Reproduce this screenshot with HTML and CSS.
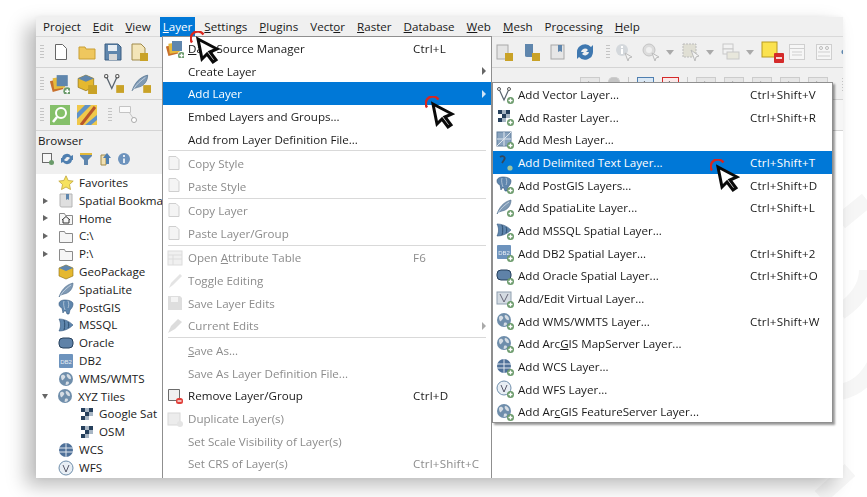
FILE: index.html
```html
<!DOCTYPE html>
<html lang="en">
<head>
<meta charset="utf-8">
<title>QGIS Layer menu</title>
<link rel="stylesheet" href="styles.css">
</head>
<body>
<svg class="defs" width="0" height="0" aria-hidden="true">
  <defs>
    <g id="plus"><circle cx="12.5" cy="12.5" r="3.5" fill="#6a9a6a"/><path d="M10.5 12.5h4M12.5 10.5v4" stroke="#fff" stroke-width="1.3"/></g>
    <g id="globe"><circle cx="8" cy="8" r="7" fill="#6f8eab"/><path d="M3 5c2-2 3-1 4 0s-1 3-2 4-2-1-2-4zM9 3c2 0 4 2 4 4s-2 1-3 0-2-3-1-4zM8 11c2-1 3 0 3 1s-2 2-3 2 0-2 0-3z" fill="#d6dde4"/></g>
    <g id="folder"><path d="M1.500 3.500h5l1 2h7v9h-13z" fill="#f6f6f6" stroke="#8a8a8a"/></g>
    <g id="checker"><path fill="#26405c" d="M2 2h4v4h-4zM10 2h4v4h-4zM6 6h4v4h-4zM2 10h4v4h-4z"/><path fill="#a8b6c4" d="M6 2h4v4h-4zM10 6h4v4h-4zM6 10h4v4h-4z"/></g>
    <g id="elephant"><path d="M1 5c0-3 3-4 6-4s8 1 8 4-2 5-3 6l-1 4h-2l-1-3-2 0-1 2-1-5c-2-1-3-2-3-4z" fill="#5f86ad" stroke="#34587d" stroke-width=".6"/><path d="M6 2c-1 3 0 6 1 9M10 2c1 2 1 5 0 7" stroke="#c9d6e3" fill="none" stroke-width=".7"/></g>
    <g id="feather"><path d="M1 15C3 9 7 3 15 1c0 5-3 10-9 11l-3 1z" fill="#7f9ab5" stroke="#4e6c8a" stroke-width=".6"/><path d="M2 14C5 9 9 6 13 3" stroke="#d8e2ec" fill="none" stroke-width=".7"/></g>
    <g id="fish"><path d="M1 2c5 0 10 2 14 6-4 4-9 6-14 6 2-4 2-8 0-12z" fill="#5f86ad" stroke="#34587d" stroke-width=".6"/><path d="M6 3c1 3 1 7 0 10M10 5c1 2 1 4 0 6" stroke="#2e4f70" fill="none"/></g>
    <g id="pill"><rect x="1" y="3" width="14" height="10" rx="4" fill="#5f82a8" stroke="#26405c"/></g>
    <g id="db2"><rect x="1" y="1" width="14" height="14" rx="1" fill="#6d93bd"/><text x="8" y="10.500" class="db2-text">DB2</text></g>
    <g id="cube"><path d="M8 1l7 3v8l-7 3-7-3V4z" fill="#e5b82f" stroke="#8a6d10" stroke-width=".6"/><path d="M8 1l7 3-7 3-7-3z" fill="#5f86ad"/></g>
    <g id="vnode"><path d="M2 2l5 11 5-11" fill="none" stroke="#5a6570" stroke-width="1.200"/><circle cx="2" cy="2" r="1.500" fill="#fff" stroke="#555"/><circle cx="12" cy="2" r="1.500" fill="#fff" stroke="#555"/></g>
    <g id="page"><path d="M3 1.500h7l3 3v10h-10z" fill="#f4f4f4" stroke="#cfcfcf"/></g>
    <g id="pointer"><path d="M8 8L27 18 20 21 26 29 23 31 17 23 12 28z" fill="#fff" stroke="#0a0a0a" stroke-width="3"/><path d="M2 11.500A7 7 0 0 1 13.500 3.500" fill="none" stroke="#d8261e" stroke-width="2.400"/></g>
  </defs>
</svg>

<svg class="watermark" viewBox="0 0 867 497" aria-hidden="true">
  <path d="M840 222L867 200M840 312C858 300 867 285 867 270M840 392C880 385 890 330 880 300M820 497L850 470" fill="none" stroke="#f6f6f6" stroke-width="16"/>
</svg>

<div class="window">
  <nav class="menubar">
    <span class="mb">Pro<u>j</u>ect</span><span class="mb"><u>E</u>dit</span><span class="mb"><u>V</u>iew</span><span class="mb active"><u>L</u>ayer</span><span class="mb"><u>S</u>ettings</span><span class="mb"><u>P</u>lugins</span><span class="mb">Vect<u>o</u>r</span><span class="mb"><u>R</u>aster</span><span class="mb"><u>D</u>atabase</span><span class="mb"><u>W</u>eb</span><span class="mb"><u>M</u>esh</span><span class="mb">Pr<u>o</u>cessing</span><span class="mb"><u>H</u>elp</span>
  </nav>

  <div class="toolbar tb1">
    <i class="grip"></i>
    <svg class="ti" viewBox="0 0 18 18"><path d="M3.500 1.500h7l4 4v11h-11z" fill="#fff" stroke="#666"/></svg>
    <svg class="ti" viewBox="0 0 18 18"><path d="M1 4h6l1 2h9v10H1z" fill="#efc75e" stroke="#c99f34"/></svg>
    <svg class="ti" viewBox="0 0 18 18"><path d="M1 1h13l3 3v13H1z" fill="#5f86ad" stroke="#3c5f82"/><rect x="4" y="2" width="9" height="6" fill="#e8eef4"/><rect x="5" y="11" width="8" height="6" fill="#d8d8d8"/></svg>
    <svg class="ti" viewBox="0 0 18 18"><path d="M2 1h9l4 4v12H2z" fill="#f3e5b8" stroke="#a08a4a"/><rect x="10" y="10" width="8" height="8" fill="#c9a227"/></svg>
  </div>
  <div class="toolbar tb2">
    <i class="grip"></i>
    <svg class="ti big" viewBox="0 0 18 18"><rect x="1" y="5" width="10" height="10" fill="#c8702c" transform="rotate(-15 6 10)"/><rect x="3" y="3" width="10" height="10" fill="#e6ba3c" transform="rotate(-8 8 8)"/><rect x="6" y="1" width="10" height="10" fill="#5f86ad"/><use href="#plus" x="3" y="3"/></svg>
    <svg class="ti big" viewBox="0 0 18 18"><use href="#cube"/><rect x="10" y="10" width="8" height="8" fill="#c9a227"/></svg>
    <svg class="ti big" viewBox="0 0 18 18"><use href="#vnode"/><rect x="11" y="10" width="7" height="7" fill="#c9a227"/></svg>
    <svg class="ti big" viewBox="0 0 18 18"><use href="#feather"/><rect x="11" y="10" width="7" height="7" fill="#c9a227"/></svg>
  </div>
  <div class="toolbar tb3">
    <i class="grip"></i>
    <svg class="ti big" viewBox="0 0 20 20"><rect width="20" height="20" fill="#85c06a"/><circle cx="11" cy="8" r="5" fill="none" stroke="#fff" stroke-width="2"/><path d="M7 12l-4 5" stroke="#fff" stroke-width="2.500"/></svg>
    <svg class="ti big" viewBox="0 0 20 20"><rect width="20" height="20" fill="#f0c84a"/><path d="M0 8l8-8h6L0 14zM20 10L8 20h6l6-5z" fill="#5f92c8"/><path d="M4 20L18 2" stroke="#b8562c" stroke-width="3"/></svg>
    <i class="grip wide"></i>
    <svg class="ti big" viewBox="0 0 20 20"><path d="M1.500 1.500h11v6h-11z" fill="#fafafa" stroke="#c4c4c4"/><path d="M11 7l6 9" stroke="#c4c4c4"/><circle cx="16" cy="15" r="2.500" fill="#fff" stroke="#aaa"/></svg>
  </div>

  <section class="browser">
    <h2 class="browser-title">Browser</h2>
    <div class="browser-tools">
      <svg class="bt" viewBox="0 0 14 14"><rect x="1.500" y="1.500" width="9" height="9" fill="#f6f6f6" stroke="#6b6b6b"/><circle cx="10.500" cy="10.500" r="2.500" fill="#6a9a6a"/></svg>
      <svg class="bt" viewBox="0 0 14 14"><path d="M2 6a5 5 0 0 1 9-2l2-1v5H8l2-2a3 3 0 0 0-5 1zM12 8a5 5 0 0 1-9 2l-2 1V6h5L4 8a3 3 0 0 0 5-1z" fill="#4f7fb0"/></svg>
      <svg class="bt" viewBox="0 0 14 14"><path d="M1 1h12v3L9 8v5H5V8L1 4z" fill="#5f86ad"/><rect x="1" y="1" width="12" height="2" fill="#e2b93a"/></svg>
      <svg class="bt" viewBox="0 0 14 14"><path d="M3 3h5v10H3z" fill="#f0e0b4" stroke="#a08a4a"/><path d="M9 1l4 5h-2v6H8V6H5z" fill="#4f7fb0"/></svg>
      <svg class="bt" viewBox="0 0 14 14"><circle cx="7" cy="7" r="6" fill="#6d93bd"/><path d="M7 3v2M7 6.500V11" stroke="#fff" stroke-width="1.600"/></svg>
    </div>
    <ul class="tree">
      <li class="node"><i class="arrow none"></i><svg class="ni" viewBox="0 0 16 16"><path d="M8 .8l2.200 4.700 5 .6-3.700 3.400 1 5L8 12l-4.500 2.500 1-5L.8 6.100l5-.6z" fill="#f6e25e" stroke="#bfa53a" stroke-width=".8"/></svg><span>Favorites</span></li>
      <li class="node"><i class="arrow"></i><svg class="ni" viewBox="0 0 16 16"><path d="M2 1h12v13H4c-2 0-2-1-2-2z" fill="#dfdfdf" stroke="#b4b4b4"/><path d="M8 1h3v6l-1.500-1L8 7z" fill="#5f86ad"/></svg><span>Spatial Bookma</span></li>
      <li class="node"><i class="arrow"></i><svg class="ni" viewBox="0 0 16 16"><use href="#folder"/><path d="M4 10l4-3.500 4 3.500M5 9.500V13h6V9.500" fill="none" stroke="#333"/></svg><span>Home</span></li>
      <li class="node"><i class="arrow"></i><svg class="ni" viewBox="0 0 16 16"><use href="#folder"/></svg><span>C:\</span></li>
      <li class="node"><i class="arrow"></i><svg class="ni" viewBox="0 0 16 16"><use href="#folder"/></svg><span>P:\</span></li>
      <li class="node"><i class="arrow none"></i><svg class="ni" viewBox="0 0 16 16"><use href="#cube"/></svg><span>GeoPackage</span></li>
      <li class="node"><i class="arrow none"></i><svg class="ni" viewBox="0 0 16 16"><use href="#feather"/></svg><span>SpatiaLite</span></li>
      <li class="node"><i class="arrow none"></i><svg class="ni" viewBox="0 0 16 16"><use href="#elephant"/></svg><span>PostGIS</span></li>
      <li class="node"><i class="arrow none"></i><svg class="ni" viewBox="0 0 16 16"><use href="#fish"/></svg><span>MSSQL</span></li>
      <li class="node"><i class="arrow none"></i><svg class="ni" viewBox="0 0 16 16"><use href="#pill"/></svg><span>Oracle</span></li>
      <li class="node"><i class="arrow none"></i><svg class="ni" viewBox="0 0 16 16"><use href="#db2"/></svg><span>DB2</span></li>
      <li class="node"><i class="arrow none"></i><svg class="ni" viewBox="0 0 16 16"><use href="#globe"/></svg><span>WMS/WMTS</span></li>
      <li class="node"><i class="arrow open"></i><svg class="ni" viewBox="0 0 16 16"><use href="#globe"/></svg><span>XYZ Tiles</span></li>
      <li class="node child"><svg class="ni" viewBox="0 0 16 16"><use href="#checker"/></svg><span>Google Sat</span></li>
      <li class="node child"><svg class="ni" viewBox="0 0 16 16"><use href="#checker"/></svg><span>OSM</span></li>
      <li class="node"><i class="arrow none"></i><svg class="ni" viewBox="0 0 16 16"><circle cx="8" cy="8" r="7" fill="#4f7199"/><path d="M1 6h14M1 10h14M8 1v14" stroke="#dfe6ee"/></svg><span>WCS</span></li>
      <li class="node"><i class="arrow none"></i><svg class="ni" viewBox="0 0 16 16"><circle cx="8" cy="8" r="7" fill="#e8eef4" stroke="#6f8eab"/><path d="M5 5l3 7 3-7" fill="none" stroke="#556"/></svg><span>WFS</span></li>
    </ul>
  </section>

  <div class="right-bars">
    <div class="rb rb1">
      <svg class="ti" viewBox="0 0 18 18"><rect x="2" y="2" width="11" height="14" fill="#e4e4e4" stroke="#a8a8a8"/><rect x="10" y="10" width="8" height="8" fill="#c9a227"/></svg>
      <svg class="ti" viewBox="0 0 18 18"><path d="M3 1h8v13H5c-2 0-2-1-2-2z" fill="#5f86ad"/><rect x="10" y="10" width="8" height="8" fill="#c9a227"/></svg>
      <svg class="ti" viewBox="0 0 18 18"><rect x="2" y="2" width="13" height="14" fill="#e6e6e6" stroke="#a8a8a8"/><path d="M9 2h4v7l-2-1-2 1z" fill="#5f86ad"/></svg>
      <svg class="ti" viewBox="0 0 18 18"><path d="M1 9a8 8 0 0 1 14-5l2-2v7h-7l2-2a4 4 0 0 0-7 2zM17 9a8 8 0 0 1-14 5l-2 2V9h7l-2 2a4 4 0 0 0 7-2z" fill="#3f78b0"/></svg>
      <i class="grip"></i>
      <svg class="ti" viewBox="0 0 18 18"><circle cx="7" cy="7" r="6" fill="#d4d8dc"/><path d="M7 3v2M7 6v5" stroke="#fff" stroke-width="2"/><path d="M10 10l7 4-3 1-1 3z" fill="#f4f4f4" stroke="#bbb"/></svg>
      <svg class="ti" viewBox="0 0 18 18"><circle cx="7" cy="7" r="6" fill="#dcdcdc" stroke="#c4c4c4"/><circle cx="7" cy="7" r="3" fill="#f0f0f0"/><path d="M10 10l7 4-3 1-1 3z" fill="#f4f4f4" stroke="#bbb"/></svg>
      <i class="tri"></i>
      <svg class="ti" viewBox="0 0 18 18"><rect x="1" y="1" width="13" height="13" fill="#e0dfd4" stroke="#bbb" stroke-dasharray="2 1"/><path d="M9 7l8 6-3 1-1 4z" fill="#f4f4f4" stroke="#bbb"/></svg>
      <i class="tri"></i>
      <svg class="ti" viewBox="0 0 18 18"><rect x="1" y="1" width="10" height="5" fill="#f2f2f2" stroke="#c8c8c8"/><rect x="1" y="6" width="10" height="5" fill="#f2f2f2" stroke="#c8c8c8"/><rect x="5" y="9" width="12" height="7" fill="#e8e7dc" stroke="#c8c8c8"/></svg>
      <i class="tri"></i>
      <svg class="ti wide-ti" viewBox="0 0 24 24"><rect x="1" y="2" width="15" height="15" fill="#fbe24e" stroke="#b89a20"/><rect x="13" y="13" width="10" height="10" rx="1" fill="#d42a2a"/><path d="M15 18h6" stroke="#fff" stroke-width="1.600"/></svg>
      <svg class="ti" viewBox="0 0 18 18"><rect x="1.500" y="1.500" width="15" height="15" fill="#f6f6f6" stroke="#cfcfcf"/><path d="M1.500 5.500h15M4 9h10M4 12h10" stroke="#cfcfcf"/></svg>
      <svg class="ti" viewBox="0 0 18 18"><rect x="1.500" y="1.500" width="15" height="15" fill="#f6f6f6" stroke="#cfcfcf"/><circle cx="6" cy="5" r="1.500" fill="none" stroke="#bbb"/><circle cx="12" cy="5" r="1.500" fill="none" stroke="#bbb"/><path d="M3 9h12M3 13h12" stroke="#cfcfcf"/></svg>
      <svg class="ti small" viewBox="0 0 10 18"><circle cx="6" cy="9" r="3" fill="#5f86ad"/></svg>
    </div>
    <div class="rb rb2">
      <span class="lbl">abc</span><span class="lbl disc"></span><i class="vsep"></i>
      <span class="lbl blue">abc</span><span class="lbl red">abc</span><i class="vsep"></i>
      <span class="lbl">abc</span><span class="lbl">abc</span><span class="lbl">abc</span><span class="lbl">abc</span><span class="lbl">abc</span>
      <i class="grip"></i>
    </div>
    <div class="rb rb3"></div>
  </div>

  <div class="menu main-menu">
    <div class="mi"><svg class="mic" viewBox="0 0 18 18"><rect x="1" y="5" width="10" height="10" fill="#c8702c" transform="rotate(-15 6 10)"/><rect x="3" y="3" width="10" height="10" fill="#e6ba3c" transform="rotate(-8 8 8)"/><rect x="6" y="1" width="10" height="10" fill="#5f86ad"/><use href="#plus" x="3" y="3"/></svg><span class="lb"><u>D</u>ata Source Manager</span><span class="sc">Ctrl+L</span></div>
    <div class="mi"><span class="lb">Create Layer</span><i class="sub"></i></div>
    <div class="mi sel"><span class="lb">Add Layer</span><i class="sub"></i></div>
    <div class="mi"><span class="lb">Embed Layers and Groups...</span></div>
    <div class="mi"><span class="lb">Add from Layer Definition File...</span></div>
    <hr class="sep">
    <div class="mi off"><svg class="mic" viewBox="0 0 18 18"><use href="#page"/></svg><span class="lb">Copy Style</span></div>
    <div class="mi off"><svg class="mic" viewBox="0 0 18 18"><use href="#page"/></svg><span class="lb">Paste Style</span></div>
    <hr class="sep">
    <div class="mi off"><svg class="mic" viewBox="0 0 18 18"><use href="#page"/></svg><span class="lb">Copy Layer</span></div>
    <div class="mi off"><svg class="mic" viewBox="0 0 18 18"><use href="#page"/></svg><span class="lb">Paste Layer/Group</span></div>
    <hr class="sep">
    <div class="mi off"><svg class="mic" viewBox="0 0 18 18"><rect x="2" y="2" width="14" height="14" fill="#f0f0f0" stroke="#dcdcdc"/><path d="M2 6h14M2 10h14M7 6v10" stroke="#dcdcdc"/></svg><span class="lb">Open <u>A</u>ttribute Table</span><span class="sc">F6</span></div>
    <div class="mi off"><svg class="mic" viewBox="0 0 18 18"><path d="M3 16l2-5 9-9 2 2-9 9z" fill="#e4e4e4"/></svg><span class="lb">Toggle Editing</span></div>
    <div class="mi off"><svg class="mic" viewBox="0 0 18 18"><path d="M2 2h12l2 2v12H2z" fill="#dedede"/><rect x="5" y="3" width="7" height="5" fill="#f4f4f4"/></svg><span class="lb">Save Layer Edits</span></div>
    <div class="mi off"><svg class="mic" viewBox="0 0 18 18"><path d="M2 16l3-7 7-7 4 3-7 7z" fill="#dcdcdc"/></svg><span class="lb">Current Edits</span><i class="sub pale"></i></div>
    <hr class="sep">
    <div class="mi off"><span class="lb"><u>S</u>ave As...</span></div>
    <div class="mi off"><span class="lb">Save As Layer Definition File...</span></div>
    <div class="mi"><svg class="mic" viewBox="0 0 18 18"><path d="M2.500 2.500h11v11h-11z" fill="#f0f0f0" stroke="#6b6b6b"/><rect x="10" y="11" width="7" height="6" rx="2.500" fill="#e0403a"/><path d="M11.500 14h4" stroke="#fff" stroke-width="1.300"/></svg><span class="lb">Remove Layer/Group</span><span class="sc">Ctrl+D</span></div>
    <div class="mi off"><svg class="mic" viewBox="0 0 18 18"><rect x="2" y="3" width="12" height="12" fill="#ececec" stroke="#d8d8d8"/><circle cx="14" cy="14" r="3" fill="#e4e4e4"/></svg><span class="lb">Duplicate Layer(s)</span></div>
    <div class="mi off"><span class="lb">Set Scale Visibility of Layer(s)</span></div>
    <div class="mi off"><span class="lb">Set CRS of Layer(s)</span><span class="sc">Ctrl+Shift+C</span></div>
  </div>

  <div class="menu sub-menu">
    <div class="mi"><svg class="mic" viewBox="0 0 18 18"><use href="#vnode" x="1" y="1"/><use href="#plus" x="2" y="2"/></svg><span class="lb">Add Vector Layer...</span><span class="sc">Ctrl+Shift+V</span></div>
    <div class="mi"><svg class="mic" viewBox="0 0 18 18"><use href="#checker"/><use href="#plus" x="2" y="2"/></svg><span class="lb">Add Raster Layer...</span><span class="sc">Ctrl+Shift+R</span></div>
    <div class="mi"><svg class="mic" viewBox="0 0 18 18"><rect x="1" y="1" width="14" height="14" fill="#8aa4bf" stroke="#5f7d9b"/><path d="M1 15L15 1M1 8h14M8 1v14" stroke="#dfe6ee"/><use href="#plus" x="2" y="2"/></svg><span class="lb">Add Mesh Layer...</span></div>
    <div class="mi sel2"><svg class="mic" viewBox="0 0 18 18"><path d="M4 3c3-2 6 0 4 3l-2 3" fill="none" stroke="#33475c" stroke-width="1.800"/><circle cx="14" cy="14" r="2.600" fill="#9fc49f"/></svg><span class="lb">Add Delimited Text Layer...</span><span class="sc">Ctrl+Shift+T</span></div>
    <div class="mi"><svg class="mic" viewBox="0 0 18 18"><use href="#elephant"/><use href="#plus" x="2" y="2"/></svg><span class="lb">Add PostGIS Layers...</span><span class="sc">Ctrl+Shift+D</span></div>
    <div class="mi"><svg class="mic" viewBox="0 0 18 18"><use href="#feather"/><use href="#plus" x="2" y="2"/></svg><span class="lb">Add SpatiaLite Layer...</span><span class="sc">Ctrl+Shift+L</span></div>
    <div class="mi"><svg class="mic" viewBox="0 0 18 18"><use href="#fish"/><use href="#plus" x="2" y="2"/></svg><span class="lb">Add MSSQL Spatial Layer...</span></div>
    <div class="mi"><svg class="mic" viewBox="0 0 18 18"><use href="#db2"/><use href="#plus" x="2" y="2"/></svg><span class="lb">Add DB2 Spatial Layer...</span><span class="sc">Ctrl+Shift+2</span></div>
    <div class="mi"><svg class="mic" viewBox="0 0 18 18"><use href="#pill"/><use href="#plus" x="2" y="2"/></svg><span class="lb">Add Oracle Spatial Layer...</span><span class="sc">Ctrl+Shift+O</span></div>
    <div class="mi"><svg class="mic" viewBox="0 0 18 18"><rect x="1" y="2" width="14" height="12" fill="#d4dbe2" stroke="#8fa0b0"/><path d="M4 4l4 8 4-8" fill="none" stroke="#667"/><use href="#plus" x="2" y="2"/></svg><span class="lb">Add/Edit Virtual Layer...</span></div>
    <div class="mi"><svg class="mic" viewBox="0 0 18 18"><use href="#globe"/><use href="#plus" x="2" y="2"/></svg><span class="lb">Add WMS/WMTS Layer...</span><span class="sc">Ctrl+Shift+W</span></div>
    <div class="mi"><svg class="mic" viewBox="0 0 18 18"><use href="#globe"/><use href="#plus" x="2" y="2"/></svg><span class="lb">Add Arc<u>G</u>IS MapServer Layer...</span></div>
    <div class="mi"><svg class="mic" viewBox="0 0 18 18"><circle cx="8" cy="8" r="7" fill="#4f7199"/><path d="M1 6h14M1 10h14M8 1v14" stroke="#dfe6ee"/><use href="#plus" x="2" y="2"/></svg><span class="lb">Add WCS Layer...</span></div>
    <div class="mi"><svg class="mic" viewBox="0 0 18 18"><circle cx="8" cy="8" r="7" fill="#e8eef4" stroke="#6f8eab"/><path d="M5 5l3 7 3-7" fill="none" stroke="#556"/><use href="#plus" x="2" y="2"/></svg><span class="lb">Add WFS Layer...</span></div>
    <div class="mi"><svg class="mic" viewBox="0 0 18 18"><use href="#globe"/><use href="#plus" x="2" y="2"/></svg><span class="lb">Add Ar<u>c</u>GIS FeatureServer Layer...</span></div>
  </div>
</div>

<svg class="cursor c1" viewBox="0 0 30 34"><use href="#pointer"/></svg>
<svg class="cursor c2" viewBox="0 0 30 34"><use href="#pointer"/></svg>
<svg class="cursor c3" viewBox="0 0 30 34"><use href="#pointer"/></svg>
</body>
</html>
```
FILE: styles.css
```css
* { box-sizing: border-box; }
html, body { margin: 0; padding: 0; }
body {
  width: 867px; height: 497px; overflow: hidden; position: relative;
  background: #fff;
  font-family: "Open Sans", "Noto Sans", sans-serif;
  font-size: 11.6px; color: #1a1a1a;
}
.defs, .watermark { position: absolute; left: 0; top: 0; }
.watermark { width: 867px; height: 497px; }
.db2-text { font: 6px "Liberation Sans", sans-serif; fill: #e8eef4; text-anchor: middle; }
.window {
  position: absolute; left: 36px; top: 17px; width: 807px; height: 461px;
  background: #fff; overflow: hidden;
  box-shadow: -10px 8px 18px rgba(0,0,0,.26), 0 0 6px rgba(0,0,0,.05);
  display: flex; flex-direction: column;
  filter: blur(.3px);
}
.menubar {
  height: 20px; background: #f0f0f0; display: flex; align-items: center;
  padding-left: 1px; flex: none; border-bottom: 1px solid #d9d9d9;
}
.mb { padding: 0 6px; line-height: 20px; white-space: nowrap; }
.mb.active { background: #0078d7; color: #fff; margin: 0 3px; padding: 0 3px; }
.toolbar {
  display: flex; align-items: center; gap: 8px; background: #f0f0f0;
  border-bottom: 1px solid #d4d4d4; padding-left: 2px; flex: none; width: 130px;
}
.tb1 { height: 31px; } .tb2 { height: 32px; gap: 7px; } .tb3 { height: 31px; gap: 7px; }
.ti { width: 18px; height: 18px; flex: none; }
.ti.big { width: 20px; height: 20px; }
.ti.small { width: 8px; margin-left: -3px; }
.ti.wide-ti { width: 24px; height: 24px; margin-right: -6px; margin-left: -1px; }
.grip { width: 4px; height: 16px; flex: none; margin: 0 0 0 2px;
  background-image: radial-gradient(#c4c4c4 .7px, transparent .8px); background-size: 2px 3px; }
.tb2 .grip, .tb3 .grip { margin-right: -1px; }
.grip.wide { margin-left: 4px; }
.browser { flex: 1; width: 126px; display: flex; flex-direction: column; background: #f0f0f0; min-height: 0; }
.browser-title { font-weight: 400; font-size: 11.6px; margin: 0; padding: 2px 0 0 2px; height: 21px; line-height: 16px; }
.browser-tools { display: flex; gap: 5px; height: 22px; padding: 0 0 0 5px; align-items: flex-start; }
.bt { width: 14px; height: 14px; flex: none; }
.tree { list-style: none; margin: 0; padding: 0; background: #fff; flex: 1; white-space: nowrap; overflow: hidden; }
.node { height: 17.8px; display: flex; align-items: center; line-height: 17.8px; }
.node.child { padding-left: 43px; }
.node.child .ni { margin-right: 4px; }
.arrow { width: 0; height: 0; margin: 0 10px 0 7px; border-left: 5px solid #666; border-top: 3.5px solid transparent; border-bottom: 3.5px solid transparent; flex: none; }
.arrow.none { border-color: transparent; }
.arrow.open { border-left: 3.5px solid transparent; border-right: 3.5px solid transparent; border-top: 5px solid #666; border-bottom: 0; margin: 0 9px 0 6px; }
.ni { width: 16px; height: 16px; flex: none; margin-right: 5px; }

.right-bars { position: absolute; left: 456px; top: 20px; width: 351px; }
.rb { background: #f0f0f0; display: flex; align-items: center; }
.rb1 { height: 31px; border-bottom: 1px solid #d4d4d4; gap: 9px; padding-left: 3px; }
.rb1 .grip { margin: 0 -4px 0 3px; }
.rb2 { height: 32px; gap: 8px; padding: 9px 0 0 88px; border-bottom: 1px solid #d4d4d4; align-items: flex-start; overflow: hidden; }
.rb2 .grip { margin-left: 6px; height: 16px; }
.rb3 { height: 31px; background: #f6f6f6; border-bottom: 1px solid #d4d4d4; }
.tri { width: 0; height: 0; margin: 0 -1px 0 -3px; border-left: 4px solid transparent; border-right: 4px solid transparent; border-top: 5px solid #aaa; flex: none; }
.lbl { width: 20px; height: 5px; border: 1px solid #ccc; border-bottom: 0; background: #e6e6e6; color: #999; font-size: 8px; line-height: 10px; text-align: center; overflow: hidden; flex: none; }
.lbl.disc { width: 12px; border-radius: 6px 6px 0 0; background: #c4c4c4; }
.lbl.blue { width: 17px; border-color: #4f7fb0; background: #dbe8f4; color: #222; }
.lbl.red { width: 17px; border-color: #d42a2a; background: #fbe8e8; color: #222; }
.vsep { width: 1px; height: 13px; background: #c8c8c8; flex: none; }

.menu { position: absolute; background: #fff; border: 1px solid #8f8f8f; }
.main-menu { left: 126px; top: 19px; width: 330px; height: 442px; border-bottom: 0; }
.sub-menu { left: 456px; top: 65px; width: 341px; height: 341px; box-shadow: 2px 2px 2px rgba(0,0,0,.4); }
.mi { height: 22.7px; display: flex; align-items: center; padding-left: 25px; position: relative; white-space: nowrap; }
.lb { flex: none; }
.sc { position: absolute; left: 250px; letter-spacing: .18px; }
.sub-menu .sc { left: 257px; }
.mi.sel, .mi.sel2 { background: #0078d7; color: #fff; }
.mi.off { color: #8c8c8c; }
.mic { position: absolute; left: 3px; top: 2.500px; width: 18px; height: 18px; }
.sub { position: absolute; right: 5px; width: 0; height: 0; border-left: 4px solid #666; border-top: 4px solid transparent; border-bottom: 4px solid transparent; }
.sel .sub { border-left-color: #cfe4f7; }
.sub.pale { border-left-color: #aaa; }
.sep { border: 0; height: 1px; margin: 0 5px .8px 5px; background: #d9d9d9; }

.cursor { position: absolute; width: 30px; height: 34px; z-index: 5; filter: blur(.3px); }
.c1 { left: 190px; top: 31px; }
.c2 { left: 425px; top: 96px; }
.c3 { left: 710px; top: 159px; }
```
